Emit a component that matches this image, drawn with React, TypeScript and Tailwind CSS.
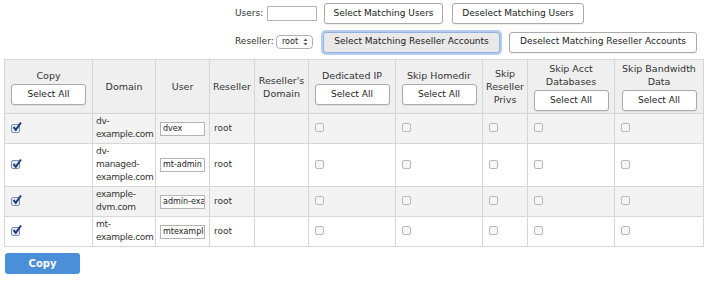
import React from 'react'

const cols = [88, 63, 54, 45, 54, 87, 87, 45, 87, 89]

const rows = [
  { domain: ['dv-', 'example.com'], user: 'dvex', alt: true },
  { domain: ['dv-', 'managed-', 'example.com'], user: 'mt-admin', alt: false },
  { domain: ['example-', 'dvm.com'], user: 'admin-exa', alt: true },
  { domain: ['mt-', 'example.com'], user: 'mtexample', alt: false },
]

function Btn({ children, className = '' }: { children: React.ReactNode; className?: string }) {
  return (
    <button
      className={`h-[21px] rounded-[3px] border border-[#a9a9a9] bg-white text-[9px] text-[#222] shadow-[0_1px_0_rgba(0,0,0,0.06)] ${className}`}
    >
      {children}
    </button>
  )
}

function Checked() {
  return (
    <span className="inline-flex h-[9px] w-[9px] items-center justify-center rounded-[2px] border border-[#7f8fb0] bg-[#e6ecf6]">
      <svg width="10" height="10" viewBox="0 0 10 10" className="-mt-[2px] ml-[2px] overflow-visible">
        <path d="M1.5 5 L3.8 7.8 L9 0.5" fill="none" stroke="#1f3a80" strokeWidth="2" />
      </svg>
    </span>
  )
}

function Unchecked() {
  return <span className="inline-block h-[9px] w-[9px] rounded-[2px] border border-[#b9b9b9] bg-[#f6f6f6]" />
}

function HeadCell({ label, button }: { label: string[]; button?: boolean }) {
  return (
    <th className="border border-[#d6d6d6] px-[3px] py-[2px] text-center align-middle font-normal leading-[13px]">
      {label.map((l) => (
        <div key={l}>{l}</div>
      ))}
      {button && <Btn className="mx-auto mt-[2px] block w-[75px]">Select All</Btn>}
    </th>
  )
}

export default function App() {
  return (
    <div className="h-[281px] w-[716px] overflow-hidden bg-white text-[9.5px] text-[#333]" style={{ fontFamily: '"DejaVu Sans", Verdana, sans-serif' }}>
      <div className="ml-[235px] flex flex-col pt-[3px]">
        <div className="flex h-[21px] items-center">
          <span className="w-[32px] text-[9px]">Users:</span>
          <input className="h-[15px] w-[50px] border border-[#b5b5b5] bg-white" />
          <Btn className="ml-[7px] w-[119px]">Select Matching Users</Btn>
          <Btn className="ml-[9px] w-[132px]">Deselect Matching Users</Btn>
        </div>
        <div className="mt-[7px] flex h-[22px] items-center">
          <span className="w-[41px] text-[9px]">Reseller:</span>
          <span className="flex h-[14px] w-[37px] items-center justify-between rounded-[4px] border border-[#b0b0b0] bg-white pl-[5px] pr-[4px] text-[8px] text-[#222]">
            root
            <svg width="5" height="8" viewBox="0 0 5 8">
              <path d="M2.5 0.5 L4.5 3 L0.5 3 Z M2.5 7.5 L4.5 5 L0.5 5 Z" fill="#555" />
            </svg>
          </span>
          <button className="ml-[10px] h-[21px] w-[177px] rounded-[3px] border border-[#8fb2e0] bg-[#e9e9e9] text-[9px] text-[#222] shadow-[0_0_0_2px_rgba(120,165,225,0.55)]">
            Select Matching Reseller Accounts
          </button>
          <Btn className="ml-[9px] w-[188px]">Deselect Matching Reseller Accounts</Btn>
        </div>
      </div>

      <table className="ml-[4px] mt-[6px] table-fixed border-collapse" style={{ width: 699 }}>
        <colgroup>
          {cols.map((w, i) => (
            <col key={i} style={{ width: w }} />
          ))}
        </colgroup>
        <thead>
          <tr className="h-[53px] bg-[#efefef]">
            <HeadCell label={['Copy']} button />
            <HeadCell label={['Domain']} />
            <HeadCell label={['User']} />
            <HeadCell label={['Reseller']} />
            <HeadCell label={["Reseller's", 'Domain']} />
            <HeadCell label={['Dedicated IP']} button />
            <HeadCell label={['Skip Homedir']} button />
            <HeadCell label={['Skip', 'Reseller', 'Privs']} />
            <HeadCell label={['Skip Acct', 'Databases']} button />
            <HeadCell label={['Skip Bandwidth', 'Data']} button />
          </tr>
        </thead>
        <tbody>
          {rows.map((r) => (
            <tr key={r.user} className={r.alt ? 'bg-[#f3f3f3]' : 'bg-white'}>
              <td className="border border-[#d6d6d6] pl-[6px] align-middle leading-none">
                <Checked />
              </td>
              <td className="border border-[#d6d6d6] px-[3px] pb-[2px] pt-[1px] align-middle text-[9px] leading-[13px] tracking-[-0.3px]">
                {r.domain.map((d) => (
                  <div key={d}>{d}</div>
                ))}
              </td>
              <td className="border border-[#d6d6d6] px-[4px] align-middle">
                <div className="flex h-[14px] w-[45px] items-center overflow-hidden whitespace-nowrap border border-[#b5b5b5] bg-white pl-[2px] text-[8px] text-[#222]">
                  {r.user}
                </div>
              </td>
              <td className="border border-[#d6d6d6] px-[4px] align-middle text-[9px]">root</td>
              <td className="border border-[#d6d6d6]" />
              {[0, 1, 2, 3, 4].map((i) => (
                <td key={i} className="border border-[#d6d6d6] pl-[6px] align-middle leading-none">
                  <Unchecked />
                </td>
              ))}
            </tr>
          ))}
        </tbody>
      </table>

      <button className="ml-[5px] mt-[6px] block h-[21px] w-[75px] rounded-[3px] bg-[#4a8fd8] text-[10px] font-bold text-white">
        Copy
      </button>
    </div>
  )
}
